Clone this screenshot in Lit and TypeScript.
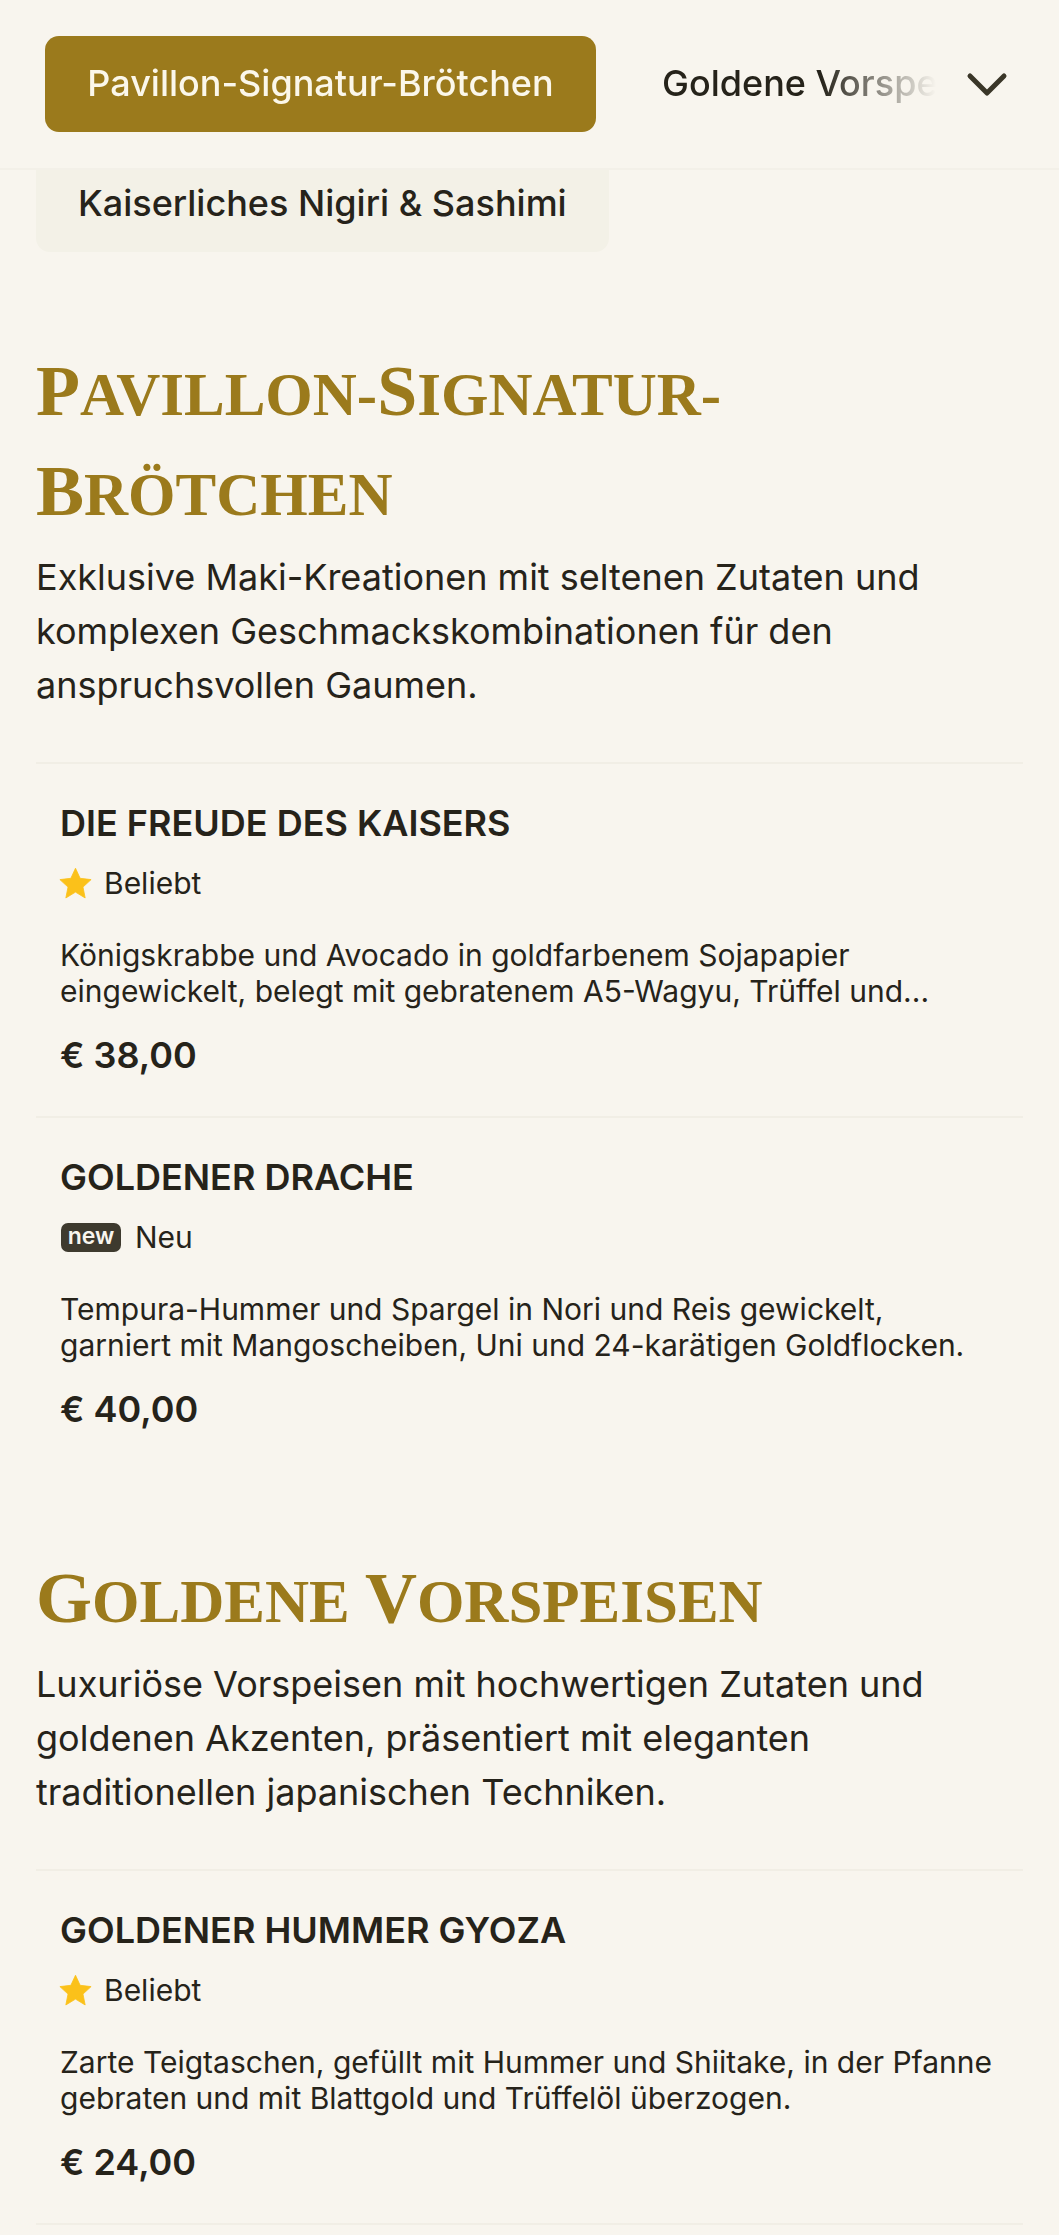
import { LitElement, html, css } from "lit";
import { customElement } from "lit/decorators.js";

type Item = { name: string; badge: "star" | "new"; desc: string[]; price: string };
type Section = { title: string[]; desc: string[]; items: Item[] };

const SECTIONS: Section[] = [
  {
    title: ["Pavillon-Signatur-", "Brötchen"],
    desc: [
      "Exklusive Maki-Kreationen mit seltenen Zutaten und",
      "komplexen Geschmackskombinationen für den",
      "anspruchsvollen Gaumen.",
    ],
    items: [
      {
        name: "DIE FREUDE DES KAISERS",
        badge: "star",
        desc: [
          "Königskrabbe und Avocado in goldfarbenem Sojapapier",
          "eingewickelt, belegt mit gebratenem A5-Wagyu, Trüffel und...",
        ],
        price: "€ 38,00",
      },
      {
        name: "GOLDENER DRACHE",
        badge: "new",
        desc: [
          "Tempura-Hummer und Spargel in Nori und Reis gewickelt,",
          "garniert mit Mangoscheiben, Uni und 24-karätigen Goldflocken.",
        ],
        price: "€ 40,00",
      },
    ],
  },
  {
    title: ["Goldene Vorspeisen"],
    desc: [
      "Luxuriöse Vorspeisen mit hochwertigen Zutaten und",
      "goldenen Akzenten, präsentiert mit eleganten",
      "traditionellen japanischen Techniken.",
    ],
    items: [
      {
        name: "GOLDENER HUMMER GYOZA",
        badge: "star",
        desc: [
          "Zarte Teigtaschen, gefüllt mit Hummer und Shiitake, in der Pfanne",
          "gebraten und mit Blattgold und Trüffelöl überzogen.",
        ],
        price: "€ 24,00",
      },
    ],
  },
];

@customElement("app-root")
export class AppRoot extends LitElement {
  static styles = css`
    :host {
      display: block;
      height: 2235px;
      overflow: hidden;
      background: #f8f5ee;
      color: #26231a;
      font-family: Inter, "Liberation Sans", sans-serif;
    }
    .bar {
      height: 170px;
      box-sizing: border-box;
      display: flex;
      align-items: center;
      padding: 0 51px 0 45px;
      border-bottom: 2px solid #f3f0e8;
    }
    .scroller {
      flex: 1;
      min-width: 0;
      display: flex;
      align-items: center;
      gap: 66px;
      overflow: hidden;
      white-space: nowrap;
      font-size: 36px;
      -webkit-mask-image: linear-gradient(to right, #000 calc(100% - 115px), transparent 100%);
      mask-image: linear-gradient(to right, #000 calc(100% - 115px), transparent 100%);
    }
    .active {
      flex: none;
      height: 96px;
      width: 551px;
      box-sizing: border-box;
      display: flex;
      align-items: center;
      justify-content: center;
      padding-bottom: 2px;
      border-radius: 14px;
      background: #9b7a1c;
      color: #fbf7ea;
      font-weight: 500;
    }
    .tab {
      font-weight: 500;
      padding-bottom: 2px;
    }
    .chev {
      flex: none;
      width: 42px;
      height: 25px;
      margin-left: 30px;
      display: block;
    }
    .content {
      padding: 0 36px;
    }
    .under {
      width: 573px;
      height: 82px;
      box-sizing: border-box;
      padding: 0 0 16px 42px;
      display: flex;
      align-items: center;
      background: #f3f1e7;
      border-radius: 0 0 14px 14px;
      font-size: 36px;
      font-weight: 500;
    }
    section {
      margin-top: 78px;
    }
    section.first {
      margin-top: 89px;
    }
    h2 {
      margin: 0;
      font-family: "Liberation Serif", serif;
      font-weight: 700;
      font-size: 72px;
      line-height: 100px;
      color: #9b7a1c;
    }
    h2 .line {
      display: block;
      white-space: nowrap;
    }
    h2 .sc {
      font-size: 61px;
      line-height: 1;
      text-transform: uppercase;
    }
    .lead {
      margin: 9px 0 50px;
      font-size: 36px;
      line-height: 54px;
    }
    .lead div,
    .desc div {
      white-space: nowrap;
    }
    .item {
      border-top: 2px solid #f1eee5;
      padding: 37px 24px 39px;
    }
    .name {
      font-size: 36px;
      font-weight: 600;
      line-height: 44px;
    }
    .tag {
      margin-top: 20px;
      height: 36px;
      display: flex;
      align-items: center;
      gap: 14px;
      font-size: 30px;
    }
    .star {
      width: 39px;
      height: 39px;
      margin: 0 -5px 0 -4px;
      display: block;
      flex: none;
    }
    .new {
      width: 60px;
      height: 29px;
      margin-left: 1px;
      display: flex;
      align-items: center;
      justify-content: center;
      border-radius: 7px;
      background: #3e3a2e;
      color: #f8f5ee;
      font-size: 23px;
      font-weight: 600;
      line-height: 1;
      padding-bottom: 2px;
      box-sizing: border-box;
    }
    .desc {
      margin-top: 36px;
      font-size: 30px;
      line-height: 36px;
    }
    .price {
      margin-top: 24px;
      font-size: 36px;
      font-weight: 600;
      line-height: 44px;
    }
    .last {
      border-top: 2px solid #f1eee5;
    }
  `;

  private smallCaps(line: string) {
    const runs = line.match(/[A-ZÄÖÜ]+|[^A-ZÄÖÜ]+/g) ?? [];
    return runs.map((r) =>
      /^[A-ZÄÖÜ]/.test(r) ? html`${r}` : html`<span class="sc">${r}</span>`
    );
  }

  private tag(kind: "star" | "new") {
    return kind === "star"
      ? html`<div class="tag">
          <svg class="star" viewBox="0 0 24 24" aria-hidden="true">
            <path
              fill="#fbc11a"
              stroke="#fbc11a"
              stroke-width=".5"
              stroke-linejoin="round"
              d="M12 2.6l2.85 6.2 6.75.8-5 4.6 1.35 6.7L12 17.3l-5.95 3.6 1.35-6.7-5-4.6 6.75-.8z"
            />
          </svg>
          <span>Beliebt</span>
        </div>`
      : html`<div class="tag"><span class="new">new</span><span>Neu</span></div>`;
  }

  render() {
    return html`
      <div class="bar">
        <div class="scroller">
          <div class="active">Pavillon-Signatur-Brötchen</div>
          <div class="tab">Goldene Vorspeisen</div>
        </div>
        <svg class="chev" viewBox="0 0 42 25" fill="none" aria-hidden="true">
          <path d="M4 4L21 21L38 4" stroke="#3a3628" stroke-width="5" stroke-linecap="round" stroke-linejoin="round" />
        </svg>
      </div>
      <div class="content">
        <div class="under">Kaiserliches Nigiri &amp; Sashimi</div>
        ${SECTIONS.map(
          (s, i) => html`<section class=${i === 0 ? "first" : ""}>
            <h2>${s.title.map((t) => html`<span class="line">${this.smallCaps(t)}</span>`)}</h2>
            <div class="lead">${s.desc.map((d) => html`<div>${d}</div>`)}</div>
            ${s.items.map(
              (it) => html`<div class="item">
                <div class="name">${it.name}</div>
                ${this.tag(it.badge)}
                <div class="desc">${it.desc.map((d) => html`<div>${d}</div>`)}</div>
                <div class="price">${it.price}</div>
              </div>`
            )}
            ${i === 1 ? html`<div class="last"></div>` : ""}
          </section>`
        )}
      </div>
    `;
  }
}
